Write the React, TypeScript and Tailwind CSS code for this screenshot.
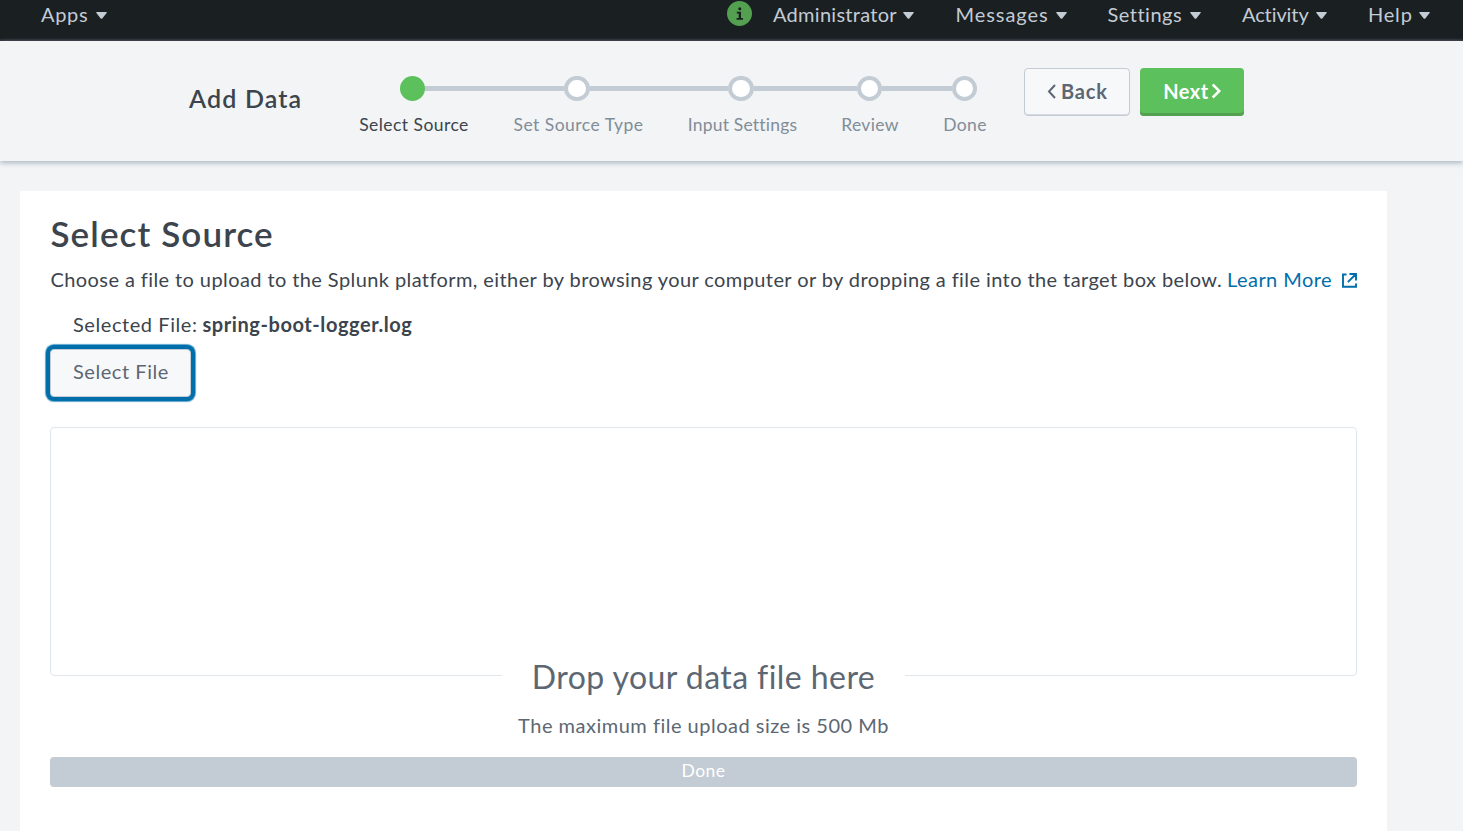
type Item = { label: string; box: string };

const menus: Item[] = [
  { label: "Administrator", box: "w-[182.5px] tracking-[0.28px]" },
  { label: "Messages", box: "w-[152px] tracking-[0.95px]" },
  { label: "Settings", box: "w-[134.5px] tracking-[0.5px]" },
  { label: "Activity", box: "w-[126px] tracking-[-0.1px]" },
  { label: "Help", box: "w-[95px] tracking-[0.8px]" },
];

const caretGap: Record<string, string> = {
  Apps: "w-[54.5px]",
  Administrator: "w-[130px]",
  Messages: "w-[100.5px]",
  Settings: "w-[82.5px]",
  Activity: "w-[73.5px]",
  Help: "w-[51px]",
};

const steps: Item[] = [
  { label: "Select Source", box: "w-[154px] tracking-[0.45px] text-[#3c444d]" },
  { label: "Set Source Type", box: "w-[175px] tracking-[0.48px] text-[#818d99]" },
  { label: "Input Settings", box: "w-[153px] tracking-[0.2px] text-[#818d99]" },
  { label: "Review", box: "w-[102px] tracking-[0.35px] text-[#818d99]" },
  { label: "Done", box: "w-[88px] tracking-[0.4px] text-[#818d99]" },
];

function Menu({ label, box }: Item) {
  return (
    <div className={`flex shrink-0 items-start ${box}`}>
      <span className={`shrink-0 whitespace-nowrap ${caretGap[label]}`}>{label}</span>
      <svg className="mt-[10px] h-[7px] w-[11px] shrink-0" viewBox="0 0 11 7" fill="#c3cbd4">
        <path d="M0.7 0H10.3Q11.2 0 10.6 0.9L6.3 6.4Q5.5 7.2 4.7 6.4L0.4 0.9Q-0.2 0 0.7 0Z" />
      </svg>
    </div>
  );
}

function Dot({ wide }: { wide?: boolean }) {
  return (
    <span
      className={`h-[25px] shrink-0 rounded-full border-4 border-[#c3cbd4] bg-white ${wide ? "w-[26px]" : "w-[25px]"}`}
    />
  );
}

function Line({ width }: { width: string }) {
  return <span className={`h-[5px] shrink-0 bg-[#c3cbd4] ${width}`} />;
}

export default function App() {
  return (
    <div className="flex h-[831px] w-[1463px] flex-col overflow-hidden bg-[#f2f4f5] font-['Lato','Open_Sans',sans-serif] text-[20px] leading-[24px] text-[#3c444d] [font-variant-ligatures:none]">
      <nav className="flex h-[41px] shrink-0 items-start border-b-2 border-[#24262d] bg-[#1a1f22] pt-[2px] text-[#c3cbd4]">
        <div className="w-[727px] shrink-0 pl-[41px]">
          <Menu label="Apps" box="w-[80px] tracking-[0.7px]" />
        </div>
        <span className="-mt-[1px] mr-[21px] flex h-[25px] w-[25px] shrink-0 items-center justify-center rounded-full bg-[#53a051]">
          <svg className="h-[13px] w-[8px]" viewBox="0 0 8 13" fill="#1a1f22">
            <circle cx="3.8" cy="1.8" r="1.5" />
            <path d="M0.8 4.8H5V11.1H7V12.7H0.6V11.1H2.7V6.4H0.8Z" />
          </svg>
        </span>
        {menus.map((m) => (
          <Menu key={m.label} {...m} />
        ))}
      </nav>

      <header className="z-10 flex h-[120px] shrink-0 bg-[#f2f4f5] shadow-[0_2px_5px_#aab6c2]">
        <h1 className="ml-[189px] mt-[42px] w-[148px] shrink-0 whitespace-nowrap text-[25px] font-semibold leading-[30px] tracking-[1.15px]">
          Add Data
        </h1>
        <div className="w-[687px] shrink-0 pt-[35px]">
          <div className="flex items-center pl-[63px]">
            <span className="h-[25px] w-[25px] shrink-0 rounded-full bg-[#5cc05c]" />
            <Line width="w-[139px]" />
            <Dot wide />
            <Line width="w-[138px]" />
            <Dot wide />
            <Line width="w-[103px]" />
            <Dot />
            <Line width="w-[70px]" />
            <Dot />
          </div>
          <div className="mt-[13px] flex text-center text-[17.5px] leading-[21px]">
            {steps.map((s) => (
              <span key={s.label} className={`shrink-0 whitespace-nowrap ${s.box}`}>
                {s.label}
              </span>
            ))}
          </div>
        </div>
        <div className="flex gap-[10px] pt-[27px] font-bold">
          <button className="flex h-[48px] w-[106px] items-start rounded-[4px] border border-[#c3cbd4] bg-[#f7f8fa] pl-[22px] pt-[10px] tracking-[0.8px] text-[#5c6773] shadow-[inset_0_-1px_0_#d5d9e0]">
            <svg className="mr-[5px] mt-[5px] h-[15px] w-[9px]" viewBox="0 0 9 15" fill="none" stroke="#5c6773" strokeWidth="2">
              <path d="M8 1L2 7.5L8 14" />
            </svg>
            Back
          </button>
          <button className="flex h-[48px] w-[104px] items-start rounded-[4px] bg-[#5cc05c] pl-[21px] pt-[11px] tracking-[0.5px] text-white shadow-[inset_0_-3px_0_#53a051]">
            <span className="w-[50px]">Next</span>
            <svg className="mt-[4px] h-[16px] w-[10px]" viewBox="0 0 10 16" fill="none" stroke="#fff" strokeWidth="2.5">
              <path d="M1.7 1.5L8.3 8L1.7 14.5" />
            </svg>
          </button>
        </div>
      </header>

      <main className="ml-[20px] mt-[30px] flex w-[1367px] flex-1 flex-col bg-white px-[30px] pt-[21px]">
        <h2 className="ml-[0.5px] h-[42px] text-[35px] font-semibold leading-[42px] tracking-[1.1px]">Select Source</h2>
        <p className="mt-[13px] flex h-[24px] whitespace-nowrap tracking-[0.41px]">
          <span className="w-[1177px] shrink-0 pl-[0.5px]">
            Choose a file to upload to the Splunk platform, either by browsing your computer or by dropping a file into the
            target box below.
          </span>
          <a className="flex tracking-[0.45px] text-[#006eaa]">
            <span className="w-[115px]">Learn More</span>
            <svg className="mt-[6px] h-[15px] w-[15px]" viewBox="0 0 15 15" fill="none" stroke="#006eaa" strokeWidth="1.9">
              <path d="M4.5 1.5H1V13.7H14V10.5M7.5 1H14V7.5M14 1L5.8 9.2" />
            </svg>
          </a>
        </p>
        <p className="ml-[23px] mt-[21px] flex h-[24px] whitespace-nowrap">
          <span className="w-[129.5px] tracking-[0.57px]">Selected File:</span>
          <b className="tracking-[0.57px]">spring-boot-logger.log</b>
        </p>
        <button className="mt-[13px] h-[48px] w-[141px] shrink-0 rounded-[4px] border border-[#c3cbd4] bg-[#f7f8fa] pb-[4px] pl-[22px] text-left tracking-[0.55px] text-[#5c6773] shadow-[0_0_0_4px_#006eaa,0_0_1px_5px_#5aa5cc]">
          Select File
        </button>
        <div className="mt-[30px] flex h-[249px] shrink-0 items-end justify-center rounded-[4px] border border-[#e1e6eb]">
          <div className="-mb-[22px] h-[40px] w-[403px] bg-white text-center text-[32px] leading-[40px] tracking-[0.43px] text-[#5c6773]">
            Drop your data file here
          </div>
        </div>
        <p className="mt-[37px] h-[24px] text-center tracking-[0.5px] text-[#5c6773]">
          The maximum file upload size is 500 Mb
        </p>
        <div className="mt-[20px] h-[30px] shrink-0 rounded-[4px] bg-[#c3cbd4] pt-[3px] text-center text-[17.5px] leading-[21px] tracking-[0.45px] text-white">
          Done
        </div>
      </main>
    </div>
  );
}
